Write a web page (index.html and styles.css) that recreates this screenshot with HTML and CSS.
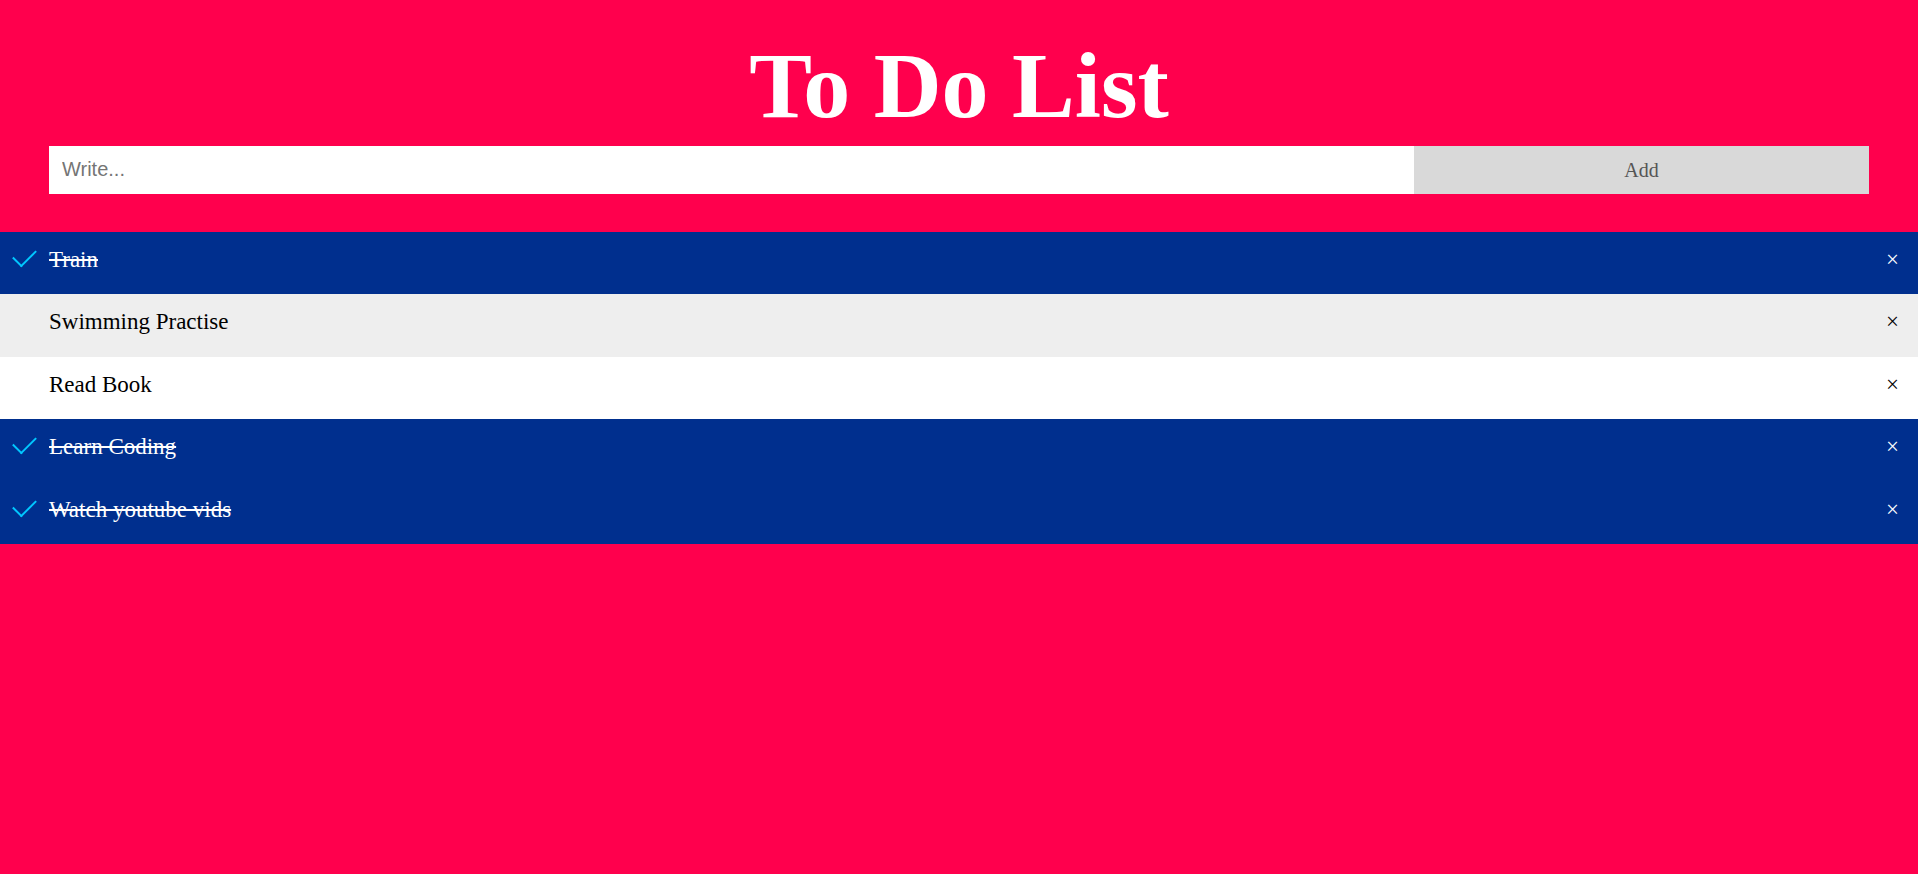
FILE: index.html
```html
<!DOCTYPE html>
<html lang="en">
<head>
<meta charset="utf-8">
<meta name="viewport" content="width=device-width, initial-scale=1">
<title>To Do List</title>
<link rel="stylesheet" href="styles.css">
</head>
<body>
<header class="header">
  <h1 class="title">To Do List</h1>
  <form class="entry">
    <input class="entry-text" type="text" placeholder="Write..." aria-label="New task">
    <button class="entry-add" type="button">Add</button>
  </form>
</header>
<ul class="tasks">
  <li class="task">
    <input class="task-check" type="checkbox" id="task-1" checked>
    <label class="task-name" for="task-1">Train</label>
    <button class="task-close" type="button" aria-label="Remove Train">×</button>
  </li>
  <li class="task">
    <input class="task-check" type="checkbox" id="task-2">
    <label class="task-name" for="task-2">Swimming Practise</label>
    <button class="task-close" type="button" aria-label="Remove Swimming Practise">×</button>
  </li>
  <li class="task">
    <input class="task-check" type="checkbox" id="task-3">
    <label class="task-name" for="task-3">Read Book</label>
    <button class="task-close" type="button" aria-label="Remove Read Book">×</button>
  </li>
  <li class="task">
    <input class="task-check" type="checkbox" id="task-4" checked>
    <label class="task-name" for="task-4">Learn Coding</label>
    <button class="task-close" type="button" aria-label="Remove Learn Coding">×</button>
  </li>
  <li class="task">
    <input class="task-check" type="checkbox" id="task-5" checked>
    <label class="task-name" for="task-5">Watch youtube vids</label>
    <button class="task-close" type="button" aria-label="Remove Watch youtube vids">×</button>
  </li>
</ul>
</body>
</html>
```
FILE: styles.css
```css
* {
  box-sizing: border-box;
}

body {
  margin: 0;
  background: #ff004d;
  font-family: "Liberation Serif", "Times New Roman", serif;
}

.header {
  padding: 30px 49px 38px;
  color: #fff;
  text-align: center;
}

.title {
  margin: 0 0 6px;
  font-size: 94px;
  line-height: 110px;
}

.entry {
  display: grid;
  grid-template-columns: 3fr 1fr;
  height: 48px;
}

.entry-text {
  min-width: 0;
  border: 0;
  border-radius: 0;
  padding: 0 13px 2px;
  background: #fff;
  font-family: "Liberation Sans", Arial, sans-serif;
  font-size: 20px;
}

.entry-add {
  border: 0;
  padding: 0;
  background: #d9d9d9;
  color: #555;
  font-family: inherit;
  font-size: 20px;
  cursor: pointer;
}

/* All rows share the height of the tallest one */
.tasks {
  display: grid;
  grid-auto-rows: 1fr;
  min-height: 312px;
  margin: 0;
  padding: 0;
  list-style: none;
}

.task {
  display: flex;
  align-items: flex-start;
  background: #fff;
  color: #000;
  font-size: 23px;
  line-height: 28px;
}

.task:nth-child(even) {
  background: #eee;
}

.task:has(.task-check:checked) {
  background: #002f8e;
  color: #fff;
}

.task-check {
  display: grid;
  place-items: center;
  flex: none;
  width: 48px;
  height: 46px;
  margin: 0 1px 0 0;
  appearance: none;
  cursor: pointer;
}

.task-check:checked::before {
  content: "";
  width: 11px;
  height: 20px;
  border: solid #00c8ff;
  border-width: 0 2px 2px 0;
  transform: rotate(45deg);
}

.task-name {
  flex: 1;
  padding: 14px 0;
  cursor: pointer;
}

.task-check:checked + .task-name {
  text-decoration: line-through 2px;
}

.task-close {
  border: 0;
  padding: 14px 19px;
  background: none;
  color: inherit;
  font: inherit;
  cursor: pointer;
}
```
